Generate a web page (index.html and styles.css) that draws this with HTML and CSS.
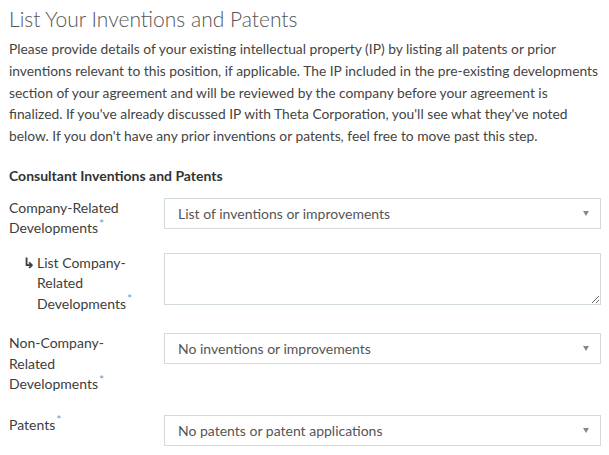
FILE: index.html
```html
<!DOCTYPE html>
<html lang="en">
<head>
<meta charset="utf-8">
<title>List Your Inventions and Patents</title>
<link rel="stylesheet" href="styles.css">
</head>
<body>
<div class="page">
  <h1 class="title">List Your Inventions and Patents</h1>
  <p class="intro">Please provide details of your existing intellectual property (IP) by listing all patents or prior<br>inventions relevant to this position, if applicable. The IP included in the pre-existing developments<br>section of your agreement and will be reviewed by the company before your agreement is<br>finalized. If you've already discussed IP with Theta Corporation, you'll see what they've noted<br>below. If you don't have any prior inventions or patents, feel free to move past this step.</p>
  <h2 class="section">Consultant Inventions and Patents</h2>
  <div class="row row-first">
    <label class="label">Company-Related Developments<sup class="req">*</sup></label>
    <div class="select"><span class="select-text">List of inventions or improvements</span><span class="caret"></span></div>
  </div>
  <div class="row row-sub">
    <label class="label label-sub"><span class="sub-arrow">↳</span><span>List Company-Related Developments<sup class="req">*</sup></span></label>
    <textarea class="textarea"></textarea>
  </div>
  <div class="row row-third">
    <label class="label">Non-Company-Related Developments<sup class="req">*</sup></label>
    <div class="select"><span class="select-text">No inventions or improvements</span><span class="caret"></span></div>
  </div>
  <div class="row row-last">
    <label class="label">Patents<sup class="req">*</sup></label>
    <div class="select"><span class="select-text">No patents or patent applications</span><span class="caret"></span></div>
  </div>
</div>
</body>
</html>
```
FILE: styles.css
```css
html, body {
  margin: 0;
  padding: 0;
  background: #ffffff;
}
body {
  font-family: "Lato", "Open Sans", sans-serif;
  color: #444444;
  font-size: 14px;
}
.page {
  padding: 6px 8px 0 9px;
}
.title {
  margin: 0;
  font-weight: 300;
  font-size: 21px;
  line-height: 26px;
  color: #555555;
}
.intro {
  margin: 6px 0 0 0;
  font-size: 13.8px;
  line-height: 21.8px;
  color: #444444;
}
.section {
  margin: 18px 0 0 0;
  font-size: 14px;
  line-height: 22px;
  font-weight: 700;
  color: #333333;
}
.row {
  display: flex;
  align-items: flex-start;
  margin-top: 18px;
}
.row-first {
  margin-top: 11px;
}
.row-sub {
  margin-top: 14px;
}
.row-third {
  margin-top: 19px;
}
.row-last {
  margin-top: 20px;
}
.label {
  width: 130px;
  margin-right: 25px;
  flex: none;
  line-height: 20.5px;
  color: #3d3d3d;
  font-size: 14px;
}
.label-sub {
  display: flex;
  padding-left: 14px;
  width: 116px;
}
.sub-arrow {
  width: 14px;
  flex: none;
  font-weight: 700;
}
.req {
  color: #5e9dd6;
  font-size: 12px;
  line-height: 0;
  vertical-align: super;
  margin-left: 1px;
}
.select {
  flex: 1;
  height: 31px;
  box-sizing: border-box;
  border: 1px solid #d3dada;
  display: flex;
  align-items: center;
  padding: 0 11px 0 13px;
  color: #555555;
  font-size: 14px;
}
.select-text {
  flex: 1;
}
.caret {
  width: 0;
  height: 0;
  border-left: 3.5px solid transparent;
  border-right: 3.5px solid transparent;
  border-top: 5px solid #888888;
}
.textarea {
  flex: 1;
  height: 52px;
  box-sizing: border-box;
  border: 1px solid #d3dada;
  border-radius: 0;
  margin: 0;
  padding: 6px 13px;
  font-family: inherit;
  font-size: 14px;
  outline: none;
}
```
